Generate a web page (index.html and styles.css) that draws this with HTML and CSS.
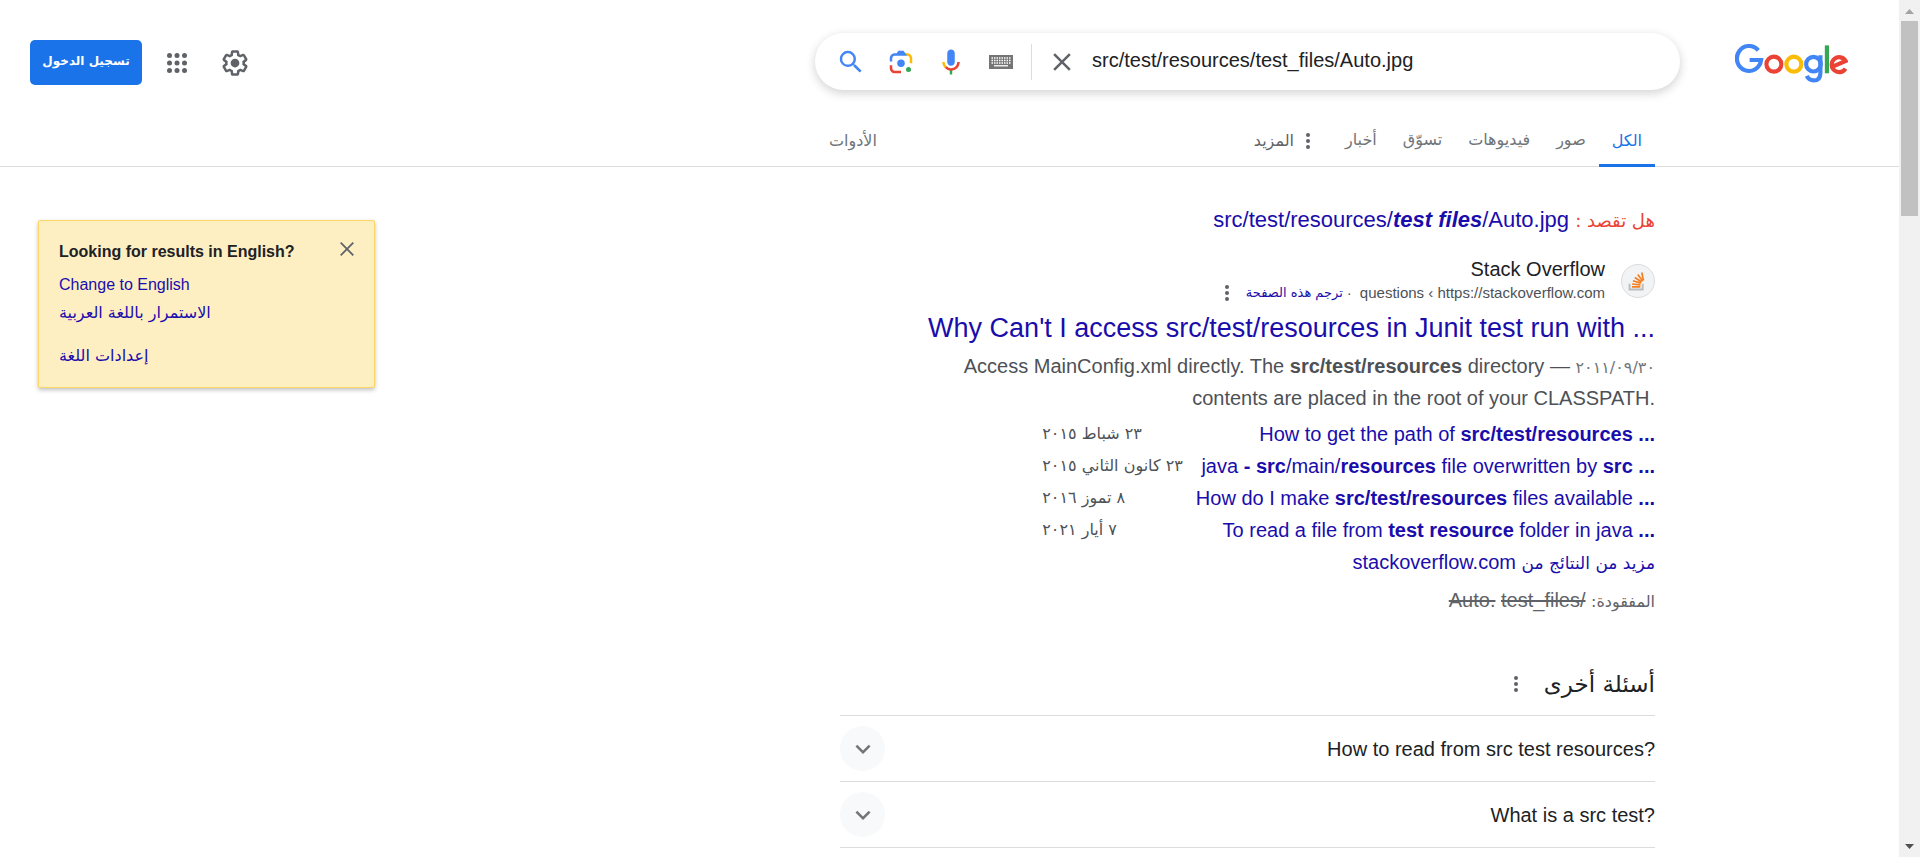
FILE: index.html
```html
<!DOCTYPE html>
<html lang="ar" dir="rtl">
<head>
<meta charset="utf-8">
<title>src/test/resources/test_files/Auto.jpg - Google</title>
<link rel="stylesheet" href="styles.css">
</head>
<body>
<div class="page">
  <header class="header">
    <a class="logo" href="#" aria-label="Google">
      <svg viewBox="46 43 340 117" fill="none" stroke-width="12.500">
        <path stroke="#4285f4" d="M116 62A36.500 37.500 0 1 0 124.500 91H90"/>
        <circle stroke="#ea4335" cx="163" cy="103.500" r="22.500"/>
        <circle stroke="#fbbc05" cx="223" cy="103.500" r="22.500"/>
        <circle stroke="#4285f4" cx="282" cy="103.500" r="22"/>
        <path stroke="#4285f4" d="M303 77V129C303 146 294 152.500 283 152.500C273 152.500 266 148 262 139"/>
        <path stroke="#34a853" d="M322.500 47V131"/>
        <path stroke="#ea4335" d="M340 111L379 94A22.500 22.500 0 1 0 378.500 117"/>
      </svg>
    </a>
    <form class="search" role="search">
      <input class="query" type="text" dir="ltr" aria-label="بحث" value="src/test/resources/test_files/Auto.jpg">
      <button class="tool clear" type="reset" aria-label="محو"><svg viewBox="0 0 24 24" fill="#5f6368"><path d="M19 6.410L17.590 5 12 10.590 6.410 5 5 6.410 10.590 12 5 17.590 6.410 19 12 13.410 17.590 19 19 17.590 13.410 12z"/></svg></button>
      <span class="divider"></span>
      <button class="tool" type="button" aria-label="لوحة المفاتيح"><svg viewBox="0 0 30 30"><path fill="#757575" d="M3 8h24v14H3z"/><path stroke="#fff" stroke-width="1.300" stroke-dasharray="1.500 1" d="M5.500 11h19.500M5.500 13.500h19.500M5.500 16h19.500"/><path stroke="#fff" stroke-width="1.300" d="M8 18.800h14"/></svg></button>
      <button class="tool" type="button" aria-label="البحث الصوتي"><svg viewBox="0 0 24 24"><path fill="#4285f4" d="m12 15c1.660 0 3-1.310 3-2.970v-7.020c0-1.660-1.340-3.010-3-3.010s-3 1.340-3 3.010v7.020c0 1.660 1.340 2.970 3 2.970z"/><path fill="#34a853" d="m11 18.080h2v3.920h-2z"/><path fill="#fbbc04" d="m7.050 16.870c-1.270-1.330-2.050-2.830-2.050-4.870h2c0 1.450.56 2.420 1.470 3.380v.32l-1.150 1.180z"/><path fill="#ea4335" d="m12 16.930a4.970 5.250 0 0 1-3.540-1.550l-1.410 1.490c1.260 1.340 3.020 2.130 4.950 2.130 3.870 0 6.990-2.920 6.990-7h-1.990c0 2.920-2.240 4.930-5 4.930z"/></svg></button>
      <button class="tool" type="button" aria-label="البحث بالصور"><svg viewBox="0 0 192 192"><circle fill="#34a853" cx="144" cy="144" r="16"/><circle fill="#4285f4" cx="96" cy="104" r="24"/><path fill="#ea4335" d="M24 135.200c0 18.110 14.690 32.800 32.800 32.800H96v-16l-40.100-.1c-8.800 0-15.900-8.190-15.900-17.900v-18H24z"/><path fill="#fbbc04" d="M168 72.800c0-18.110-14.690-32.800-32.800-32.800H116l20 16c8.800 0 16 8.290 16 18v30h16z"/><path fill="#4285f4" d="M112 24H80L68 40H56.800C38.690 40 24 54.690 24 72.800V92h16V74c0-9.710 7.200-18 16-18h80z"/></svg></button>
      <button class="tool" type="submit" aria-label="بحث Google"><svg viewBox="0 0 24 24" fill="#4285f4"><path d="M15.500 14h-.79l-.28-.27A6.471 6.471 0 0 0 16 9.500 6.500 6.500 0 1 0 9.500 16c1.610 0 3.090-.59 4.230-1.570l.27.28v.79l5 4.990L20.490 19l-4.990-5zm-6 0C7.010 14 5 11.990 5 9.500S7.010 5 9.500 5 14 7.010 14 9.500 11.990 14 9.500 14z"/></svg></button>
    </form>
    <div class="account">
      <button class="tool" type="button" aria-label="الإعدادات"><svg viewBox="0 0 24 24" fill="#5f6368"><path d="M13.850 22.250h-3.700c-.74 0-1.360-.54-1.450-1.270l-.27-1.890c-.27-.14-.53-.29-.79-.46l-1.800.72c-.7.26-1.470-.03-1.810-.65L2.200 15.530c-.35-.66-.2-1.440.36-1.880l1.530-1.190c-.01-.15-.02-.3-.02-.46 0-.15.01-.31.02-.46l-1.520-1.190c-.59-.45-.74-1.260-.37-1.880l1.850-3.190c.34-.62 1.110-.9 1.790-.63l1.810.73c.26-.17.52-.32.78-.46l.27-1.910c.09-.7.71-1.250 1.440-1.250h3.700c.74 0 1.360.54 1.450 1.270l.27 1.890c.27.14.53.29.79.46l1.800-.72c.71-.26 1.480.03 1.820.65l1.840 3.180c.36.66.2 1.440-.36 1.880l-1.520 1.190c.01.15.02.3.02.46s-.01.31-.02.46l1.520 1.190c.56.45.72 1.230.37 1.860l-1.860 3.220c-.34.62-1.110.9-1.800.63l-1.800-.72c-.26.17-.52.32-.78.46l-.27 1.910c-.1.68-.72 1.220-1.460 1.220zm-3.230-2h2.760l.37-2.550.53-.22c.44-.18.88-.44 1.340-.78l.45-.34 2.380.96 1.380-2.400-2.030-1.580.07-.56c.03-.26.06-.51.06-.78s-.03-.53-.06-.78l-.07-.56 2.030-1.580-1.390-2.400-2.390.96-.45-.35c-.42-.32-.87-.58-1.330-.77l-.52-.22-.37-2.550h-2.760l-.37 2.550-.53.21c-.44.19-.88.44-1.340.79l-.45.33-2.380-.95-1.390 2.390 2.030 1.580-.07.56a7 7 0 0 0-.06.79c0 .26.02.53.06.78l.07.56-2.030 1.580 1.380 2.400 2.390-.96.45.35c.43.33.86.58 1.330.77l.53.22z"/><circle cx="12" cy="12" r="3.500"/></svg></button>
      <button class="tool" type="button" aria-label="تطبيقات Google"><svg viewBox="0 0 24 24" fill="#5f6368"><circle cx="6" cy="6" r="2"/><circle cx="12" cy="6" r="2"/><circle cx="18" cy="6" r="2"/><circle cx="6" cy="12" r="2"/><circle cx="12" cy="12" r="2"/><circle cx="18" cy="12" r="2"/><circle cx="6" cy="18" r="2"/><circle cx="12" cy="18" r="2"/><circle cx="18" cy="18" r="2"/></svg></button>
      <a class="signin" href="#">تسجيل الدخول</a>
    </div>
  </header>

  <nav class="tabs">
    <div class="tabs-inner">
      <a class="tab active" href="#">الكل</a>
      <a class="tab" href="#">صور</a>
      <a class="tab" href="#">فيديوهات</a>
      <a class="tab" href="#">تسوّق</a>
      <a class="tab" href="#">أخبار</a>
      <button class="tab more" type="button"><svg class="dots" viewBox="0 0 4 16"><circle cx="2" cy="2" r="2"/><circle cx="2" cy="8" r="2"/><circle cx="2" cy="14" r="2"/></svg>المزيد</button>
      <button class="tab tools" type="button">الأدوات</button>
    </div>
  </nav>

  <div class="content">
    <main class="results">
      <p class="suggest"><span class="suggest-label">هل تقصد :</span> <a href="#" dir="ltr">src/test/resources/<b><i>test files</i></b>/Auto.jpg</a></p>

      <article class="result">
        <div class="source">
          <span class="favicon"><svg viewBox="0 0 34 34" fill="none"><path stroke="#bcbbbb" stroke-width="2" d="M8 20v6h14v-6"/><path stroke="#f48024" stroke-width="1.800" d="M10.500 23.200h9M10.700 20.200l8.900 1M11.600 16.700l8.500 2.600M13.600 13.200l7.300 4.800M16.800 10.200l5.200 7M21 8l1.800 8.500"/></svg></span>
          <div class="source-text">
            <div class="site">Stack Overflow</div>
            <div class="url"><cite><bdi>https://stackoverflow.com</bdi> › <bdi>questions</bdi></cite><span class="sep">·</span><a class="translate" href="#">ترجم هذه الصفحة</a><button class="menu" type="button" aria-label="نبذة عن هذه النتيجة"><svg class="dots" viewBox="0 0 4 16"><circle cx="2" cy="2" r="2"/><circle cx="2" cy="8" r="2"/><circle cx="2" cy="14" r="2"/></svg></button></div>
          </div>
        </div>
        <h3 class="title"><a href="#" dir="ltr">Why Can't I access src/test/resources in Junit test run with ...</a></h3>
        <p class="snippet"><span class="date">٢٠١١/٠٩/٣٠</span> — <span dir="ltr">Access MainConfig.xml directly. The <b>src/test/resources</b> directory contents are placed in the root of your CLASSPATH.</span></p>
        <table class="related">
          <tr><td><a href="#" dir="ltr">How to get the path of <b>src/test/resources ...</b></a></td><td class="when">٢٣ شباط ٢٠١٥</td></tr>
          <tr><td><a href="#" dir="ltr">java <b>-</b> <b>src</b>/main/<b>resources</b> file overwritten by <b>src ...</b></a></td><td class="when">٢٣ كانون الثاني ٢٠١٥</td></tr>
          <tr><td><a href="#" dir="ltr">How do I make <b>src/test/resources</b> files available <b>...</b></a></td><td class="when">٨ تموز ٢٠١٦</td></tr>
          <tr><td><a href="#" dir="ltr">To read a file from <b>test resource</b> folder in java <b>...</b></a></td><td class="when">٧ أيار ٢٠٢١</td></tr>
        </table>
        <p class="more-from"><a href="#"><span class="ar">مزيد من النتائج من</span> stackoverflow.com</a></p>
        <p class="missing"><span class="ar">المفقودة:</span> <s dir="ltr">test_files/</s> <s dir="ltr">Auto.</s></p>
      </article>

      <section class="questions">
        <div class="questions-head">
          <h2>أسئلة أخرى</h2>
          <button class="menu" type="button" aria-label="خيارات"><svg class="dots" viewBox="0 0 4 16"><circle cx="2" cy="2" r="2"/><circle cx="2" cy="8" r="2"/><circle cx="2" cy="14" r="2"/></svg></button>
        </div>
        <button class="question" type="button"><span dir="ltr">How to read from src test resources?</span><span class="chevron"><svg viewBox="0 0 24 24" fill="#70757a"><path d="M7.410 8.590L12 13.170l4.590-4.580L18 10l-6 6-6-6z"/></svg></span></button>
        <button class="question" type="button"><span dir="ltr">What is a src test?</span><span class="chevron"><svg viewBox="0 0 24 24" fill="#70757a"><path d="M7.410 8.590L12 13.170l4.590-4.580L18 10l-6 6-6-6z"/></svg></span></button>
        <div class="question-end"></div>
      </section>
    </main>

    <aside class="notice" dir="ltr">
      <div class="notice-head">
        <strong>Looking for results in English?</strong>
        <button class="close" type="button" aria-label="Close"><svg viewBox="0 0 14 14" stroke="#5f6368" stroke-width="1.800"><path d="M.7.7l12.600 12.600M13.300.7L.7 13.300"/></svg></button>
      </div>
      <a href="#">Change to English</a>
      <a class="ar" href="#">الاستمرار باللغة العربية</a>
      <a class="ar settings" href="#">إعدادات اللغة</a>
    </aside>
  </div>
</div>

<div class="scrollbar" aria-hidden="true">
  <svg class="arrow" viewBox="0 0 21 21"><path fill="#a3a3a3" d="M10.500 9L15 14H6z"/></svg>
  <div class="thumb"></div>
  <svg class="arrow down" viewBox="0 0 21 21"><path fill="#505050" d="M10.500 13L15 8H6z"/></svg>
</div>
</body>
</html>
```

FILE: styles.css
```css
* { box-sizing: border-box; }

html, body { height: 100%; }

body {
  margin: 0;
  display: flex;
  flex-direction: row-reverse;
  overflow: hidden;
  background: #fff;
  color: #202124;
  font: 20px/32px "Liberation Sans", "Noto Sans", "DejaVu Sans", sans-serif;
}

a { color: #1a0dab; text-decoration: none; }
p, h2, h3 { margin: 0; font-weight: 400; }
svg { display: block; }

button {
  border: 0;
  padding: 0;
  background: none;
  color: inherit;
  font: inherit;
  cursor: pointer;
}

.page { flex: 1; min-width: 0; }

/* Header */
.header {
  display: flex;
  align-items: center;
  padding: 33px 51px 0 30px;
}

.logo { width: 113px; padding-top: 3px; }
.logo svg { width: 113px; height: 39px; }

.search {
  display: flex;
  align-items: center;
  width: 865px;
  height: 57px;
  margin-right: 55px;
  padding: 0 25px 0 21px;
  border-radius: 29px;
  box-shadow: 0 3px 8px 1px rgba(64, 60, 67, .2);
}

.query {
  flex: 1;
  min-width: 0;
  padding: 0 0 4px;
  border: 0;
  outline: 0;
  background: none;
  color: #202124;
  font: 20px/40px "Liberation Sans", sans-serif;
}

.tool { width: 30px; height: 30px; margin-right: 20px; }
.tool svg { width: 30px; height: 30px; }
.search .clear { margin-right: 15px; }
.divider { width: 1px; height: 36px; margin-right: 15px; background: #dadce0; }
.divider + .tool { margin-right: 15px; }

.account {
  display: flex;
  align-items: center;
  margin-right: auto;
  padding-top: 2px;
}

.account .tool + .tool { margin-right: 28px; }

.signin {
  width: 112px;
  height: 45px;
  margin-right: 20px;
  border-radius: 5px;
  background: #1a73e8;
  color: #fff;
  text-align: center;
  font: bold 12px/42px "DejaVu Sans", sans-serif;
}

/* Tabs */
.tabs {
  margin-top: 25px;
  border-bottom: 1px solid #dadce0;
}

.tabs-inner {
  display: flex;
  width: 826px;
  margin-right: 244px;
}

.tab {
  height: 51px;
  padding: 0 13px;
  color: #70757a;
  font: 16px/50px "DejaVu Sans", sans-serif;
}

.tab.active {
  margin-bottom: -1px;
  height: 52px;
  border-bottom: 3px solid #1a73e8;
  color: #1a73e8;
  line-height: 52px;
}

.more { display: flex; align-items: center; gap: 12px; padding-right: 22px; color: #5f6368; }
.tools { margin-right: auto; padding: 0; }
.dots { width: 4px; height: 16px; fill: #5f6368; }

/* Content */
.content {
  display: flex;
  justify-content: space-between;
  align-items: flex-start;
  padding: 37px 244px 0 38px;
}

.results { width: 815px; }
.ar, .date, .when, .translate, .suggest-label { font-family: "DejaVu Sans", sans-serif; }
.ar, .date, .when { font-size: 16px; }
.results .ar, .date, .suggest-label { line-height: 20px; }

.suggest { font-size: 22px; }
.suggest-label { color: #ea4335; font-size: 18px; }

.source { display: flex; align-items: center; gap: 16px; margin-top: 21px; }

.favicon {
  width: 34px;
  height: 34px;
  border: 1px solid #dadce0;
  border-radius: 50%;
  background: #f1f3f4;
}

.site { line-height: 24px; }
.url { display: flex; align-items: center; font-size: 15px; line-height: 24px; color: #4d5156; }
.url cite { font-style: normal; }
.sep { margin: 0 8px 0 4px; }
.translate { font-size: 13px; }
.menu { margin-right: 17px; }

.title { margin-top: 6px; font-size: 27px; line-height: 34px; }

.snippet { max-width: 720px; margin-top: 5px; color: #4d5156; }
.date { color: #70757a; }

.related { margin-top: 4px; border-collapse: collapse; }
.related td { height: 32px; padding: 0; line-height: 28px; white-space: nowrap; }
.related .when { padding-right: 13px; color: #4d5156; text-align: left; }

.more-from .ar { font-size: 17px; }
.missing { margin-top: 6px; color: #5f6368; }

/* Related questions */
.questions { margin-top: 36px; }
.questions-head { display: flex; align-items: center; height: 63px; }
.questions-head h2 { font: 25px/40px "DejaVu Sans", sans-serif; font-size: 23px; }
.questions-head .menu { margin-right: 26px; }

.question {
  display: flex;
  justify-content: space-between;
  align-items: center;
  width: 100%;
  height: 66px;
  border-top: 1px solid #dadce0;
}

.question-end { border-top: 1px solid #dadce0; }

.chevron {
  display: flex;
  align-items: center;
  justify-content: center;
  width: 45px;
  height: 45px;
  border-radius: 50%;
  background: #f8f9fa;
}

.chevron svg { width: 30px; height: 30px; }

/* Language notice */
.notice {
  display: flex;
  flex-direction: column;
  align-items: flex-start;
  width: 337px;
  margin-top: 16px;
  padding: 15px 20px 17px;
  border: 1px solid #fdd663;
  border-radius: 2px;
  background: #feefc3;
  box-shadow: 0 2px 4px rgba(0, 0, 0, .25);
  font-size: 16px;
  line-height: 28px;
}

.notice-head {
  display: flex;
  justify-content: space-between;
  align-items: center;
  align-self: stretch;
  margin-bottom: 3px;
  line-height: 32px;
}

.close { padding-bottom: 6px; }
.close svg { width: 14px; height: 14px; }
.notice .settings { margin-top: 15px; }

/* Scrollbar */
.scrollbar {
  display: flex;
  flex-direction: column;
  width: 21px;
  background: #f1f1f1;
}

.arrow { width: 21px; height: 21px; }
.thumb { height: 195px; margin: 0 2px; background: #c1c1c1; }
.down { margin-top: auto; }
```
